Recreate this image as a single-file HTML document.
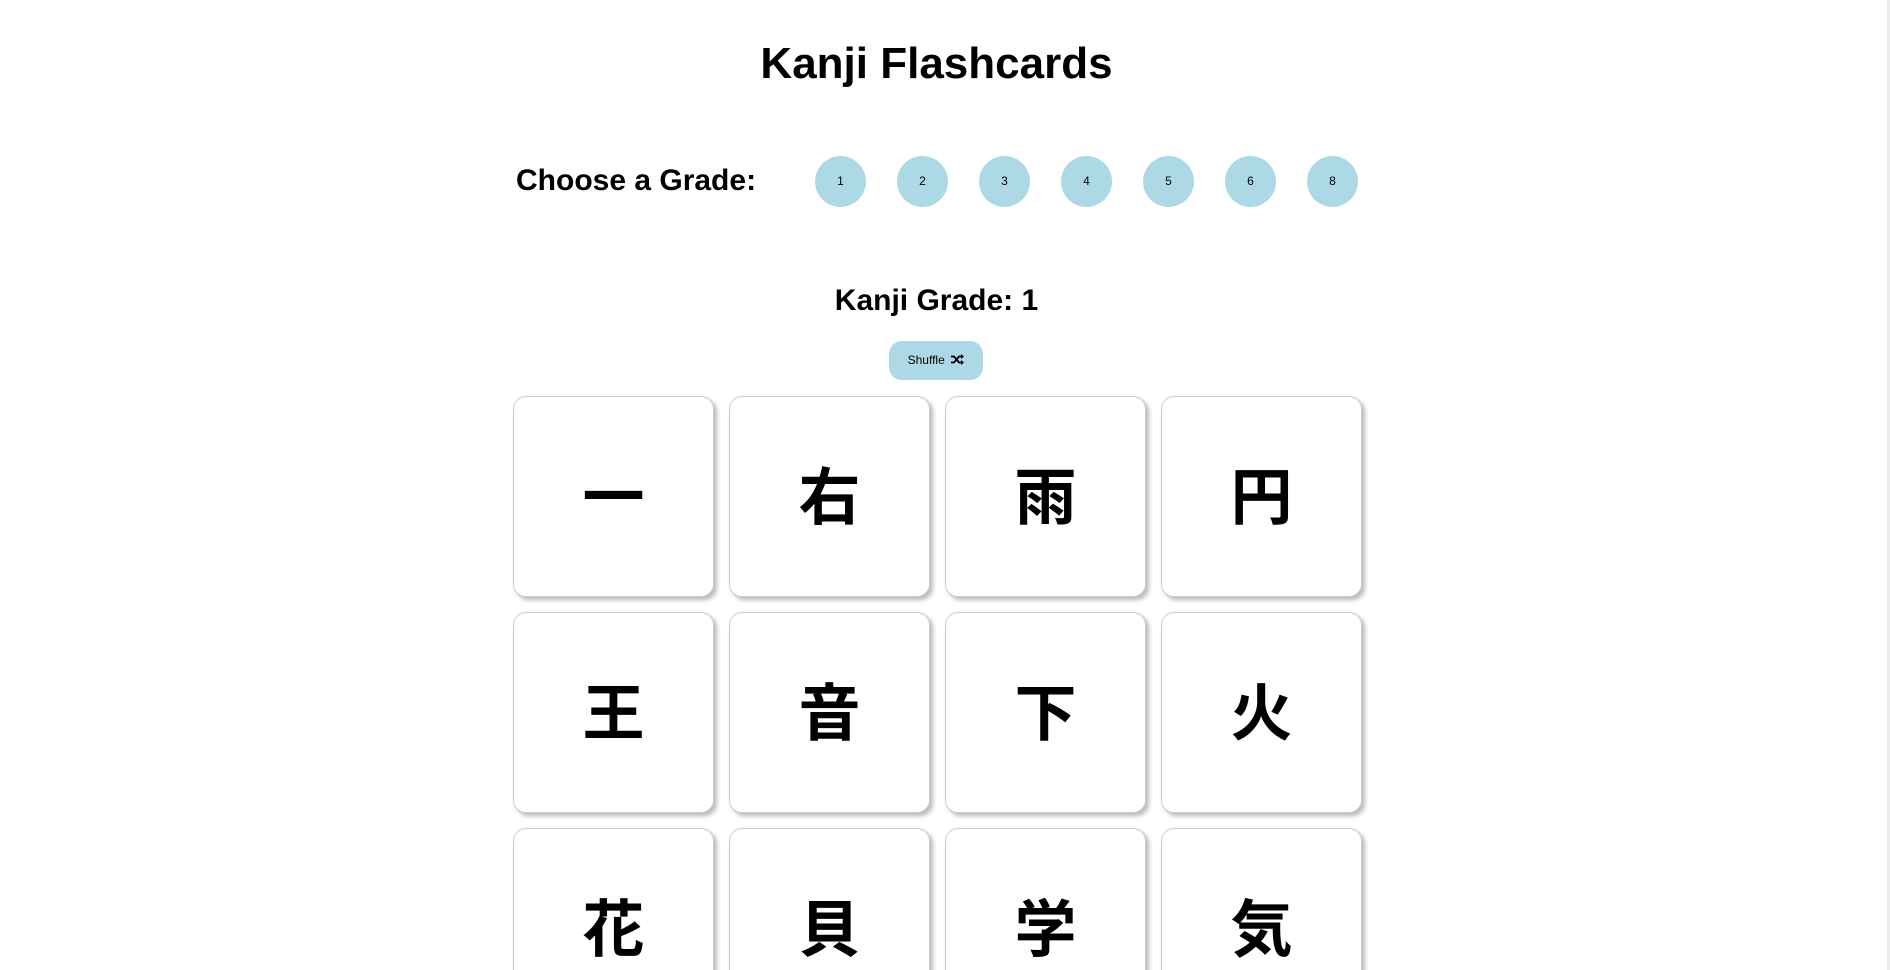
<!DOCTYPE html>
<html><head><meta charset="utf-8"><style>
html,body{margin:0;padding:0;background:#fff;width:1890px;height:970px;overflow:hidden;}
body{position:relative;font-family:"Liberation Sans","Noto Sans CJK JP",sans-serif;color:#000;}
.sb{position:absolute;right:0;top:0;width:3px;height:970px;background:#ececec;}
h1{position:absolute;left:0;width:1873px;top:36px;margin:0;text-align:center;font-size:44px;font-weight:bold;line-height:56px;}
.cg{position:absolute;left:516px;top:163px;font-size:30px;font-weight:bold;line-height:36px;margin:0;}
.c{position:absolute;top:156px;width:51px;height:51px;border-radius:50%;background:#add8e6;font-size:12px;text-align:center;line-height:51px;}
h2{position:absolute;left:0;width:1873px;top:283px;margin:0;text-align:center;font-size:30px;font-weight:bold;line-height:36px;}
.sh{position:absolute;left:889px;top:341px;width:94px;height:39px;border-radius:13px;background:#add8e6;font-size:12px;line-height:39px;text-align:center;}
.card{position:absolute;width:199px;height:199px;border:1px solid #ccc;border-radius:13px;background:#fff;box-shadow:3px 3px 5px rgba(0,0,0,.28);text-align:center;line-height:190px;font-size:62px;font-weight:bold;font-family:"Noto Sans CJK JP",sans-serif;overflow:hidden;}
</style></head><body>
<div class="sb"></div>
<h1>Kanji Flashcards</h1>
<div class="cg">Choose a Grade:</div>
<div class="c" style="left:815px">1</div>
<div class="c" style="left:897px">2</div>
<div class="c" style="left:979px">3</div>
<div class="c" style="left:1061px">4</div>
<div class="c" style="left:1143px">5</div>
<div class="c" style="left:1225px">6</div>
<div class="c" style="left:1307px">8</div>
<h2>Kanji Grade: 1</h2>
<div class="sh">Shuffle&nbsp;&nbsp;<svg width="13" height="11" viewBox="0 0 13 11" style="vertical-align:-1px"><path d="M0 2.5h3l5 6h3M0 8.5h3l5-6h3" fill="none" stroke="#000" stroke-width="1.8"/><path d="M10 0l3 2.5-3 2.5zM10 6l3 2.5-3 2.5z" fill="#000"/></svg></div>
<div class="card" style="left:513px;top:396px">一</div>
<div class="card" style="left:729px;top:396px">右</div>
<div class="card" style="left:945px;top:396px">雨</div>
<div class="card" style="left:1161px;top:396px">円</div>
<div class="card" style="left:513px;top:612px">王</div>
<div class="card" style="left:729px;top:612px">音</div>
<div class="card" style="left:945px;top:612px">下</div>
<div class="card" style="left:1161px;top:612px">火</div>
<div class="card" style="left:513px;top:828px">花</div>
<div class="card" style="left:729px;top:828px">貝</div>
<div class="card" style="left:945px;top:828px">学</div>
<div class="card" style="left:1161px;top:828px">気</div>
</body></html>
